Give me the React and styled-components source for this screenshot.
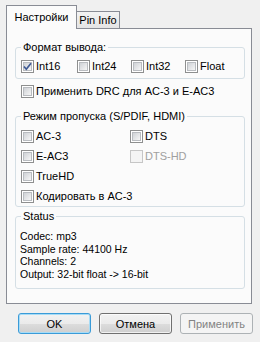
import React from 'react'
import styled, { createGlobalStyle } from 'styled-components'

const GlobalStyle = createGlobalStyle`
  html, body {
    margin: 0;
    padding: 0;
    background: #f0f0f0;
  }
  body {
    font-family: "Liberation Sans", Arial, sans-serif;
    font-size: 11px;
    color: #000;
  }
`

const Check = ({ label, checked, disabled }) => (
  <CheckLabel $disabled={disabled}>
    <Box $disabled={disabled}>
      <Inner $disabled={disabled} />
      {checked && (
        <Tick width="13" height="13" viewBox="0 0 13 13">
          <polyline points="3,6.5 5.3,9.2 10,3.2" fill="none" stroke="#3f5a94" strokeWidth="1.7" />
        </Tick>
      )}
    </Box>
    {label}
  </CheckLabel>
)

const App = () => {
  return (
    <Window>
      <GlobalStyle />
      <TabRow>
        <Tab $active>Настройки</Tab>
        <Tab>Pin Info</Tab>
      </TabRow>
      <Panel>
        <Group $mt={12} $pt={6} $pb={5}>
          <Legend>Формат вывода:</Legend>
          <FormatRow>
            <Check label="Int16" checked />
            <Check label="Int24" />
            <Check label="Int32" />
            <Check label="Float" />
          </FormatRow>
        </Group>

        <Single>
          <Check label="Применить DRC для AC-3 и E-AC3" />
        </Single>

        <Group $mt={12} $pt={7} $pb={3}>
          <Legend>Режим пропуска (S/PDIF, HDMI)</Legend>
          <PassGrid>
            <Check label="AC-3" />
            <Check label="DTS" />
            <Check label="E-AC3" />
            <Check label="DTS-HD" disabled />
            <Check label="TrueHD" />
            <span />
            <Check label="Кодировать в AC-3" />
          </PassGrid>
        </Group>

        <Group $mt={3} $pt={7} $pb={8} $pl={4}>
          <Legend $ml={1}>Status</Legend>
          <StatusLine>Codec: mp3</StatusLine>
          <StatusLine>Sample rate: 44100 Hz</StatusLine>
          <StatusLine>Channels: 2</StatusLine>
          <StatusLine>Output: 32-bit float -&gt; 16-bit</StatusLine>
        </Group>
      </Panel>

      <ButtonRow>
        <Button $variant="default">OK</Button>
        <Button>Отмена</Button>
        <Button disabled>Применить</Button>
      </ButtonRow>
    </Window>
  )
}

export default App

const Window = styled.div`
  width: 260px;
  height: 342px;
  box-sizing: border-box;
  padding: 5px 8px 0 6px;
  overflow: hidden;
`

const TabRow = styled.div`
  display: flex;
  align-items: flex-end;
  height: 23px;
`

const Tab = styled.div`
  box-sizing: border-box;
  display: flex;
  align-items: center;
  justify-content: center;
  position: relative;
  border: 1px solid #898c95;
  border-bottom: none;
  color: #000;

  ${({ $active }) => $active ? `
    width: 71px;
    height: 24px;
    margin-bottom: -1px;
    background: #fbfbfb;
    z-index: 2;
    padding-bottom: 2px;
  ` : `
    width: 44px;
    height: 17px;
    margin-left: -1px;
    background: linear-gradient(#f3f3f3, #e4e4e4);
    z-index: 1;
  `}
`

const Panel = styled.div`
  box-sizing: border-box;
  height: 276px;
  border: 1px solid #898c95;
  background: #fbfbfb;
  padding: 0 6px 0 8px;
`

const Group = styled.fieldset`
  margin: ${({ $mt }) => $mt}px 0 0 0;
  padding: ${({ $pt }) => $pt}px 0 ${({ $pb }) => $pb}px ${({ $pl }) => $pl ?? 5}px;
  min-width: 0;
  border: 1px solid #d5dfe5;
  border-radius: 3px;
`

const Legend = styled.legend`
  padding: 0 2px;
  margin-left: ${({ $ml }) => $ml ?? 0}px;
  line-height: 13px;
  height: 13px;
`

const FormatRow = styled.div`
  display: grid;
  grid-template-columns: 56px 54px 54px auto;
`

const PassGrid = styled.div`
  display: grid;
  grid-template-columns: 109px 1fr;
  row-gap: 7px;
`

const Single = styled.div`
  margin: 6px 0 0 6px;
`

const CheckLabel = styled.label`
  display: flex;
  align-items: center;
  gap: 2px;
  height: 13px;
  line-height: 13px;
  white-space: nowrap;
  color: ${({ $disabled }) => ($disabled ? '#a0a0a0' : '#000')};
`

const Box = styled.span`
  position: relative;
  box-sizing: border-box;
  flex: none;
  width: 13px;
  height: 13px;
  padding: 1px;
  border: 1px solid ${({ $disabled }) => ($disabled ? '#c6c6c6' : '#8e8f8f')};
  background: ${({ $disabled }) => ($disabled ? '#f4f4f4' : '#fff')};
`

const Inner = styled.span`
  display: block;
  box-sizing: border-box;
  width: 9px;
  height: 9px;
  border: 1px solid ${({ $disabled }) => ($disabled ? '#f4f4f4' : '#b9bcc0')};
  background: ${({ $disabled }) => ($disabled ? '#f4f4f4' : 'linear-gradient(135deg, #cfd2d6, #f6f6f6)')};
`

const Tick = styled.svg`
  position: absolute;
  left: -1px;
  top: -1px;
`

const StatusLine = styled.div`
  font-size: 10.5px;
  line-height: 12.5px;
  height: 12.5px;
  white-space: nowrap;
`

const ButtonRow = styled.div`
  display: flex;
  justify-content: flex-end;
  gap: 8px;
  margin-top: 9px;
  margin-right: -1px;
`

const Button = styled.button`
  box-sizing: border-box;
  width: 73px;
  height: 21px;
  padding: 0;
  border-radius: 3px;
  font-family: "Liberation Sans", Arial, sans-serif;
  font-size: 11px;
  color: #000;
  border: 1px solid #707070;
  background: linear-gradient(#f2f2f2 0%, #ebebeb 50%, #dddddd 51%, #cfcfcf 100%);
  box-shadow: inset 0 0 0 1px rgba(255, 255, 255, 0.7);

  ${({ $variant }) => $variant === 'default' && `
    border-color: #3a9bd8;
    box-shadow: inset 0 0 0 1px #a8dcf6;
  `}

  &:disabled {
    color: #838383;
    border-color: #adb2b5;
    background: #f4f4f4;
    box-shadow: none;
  }
`
